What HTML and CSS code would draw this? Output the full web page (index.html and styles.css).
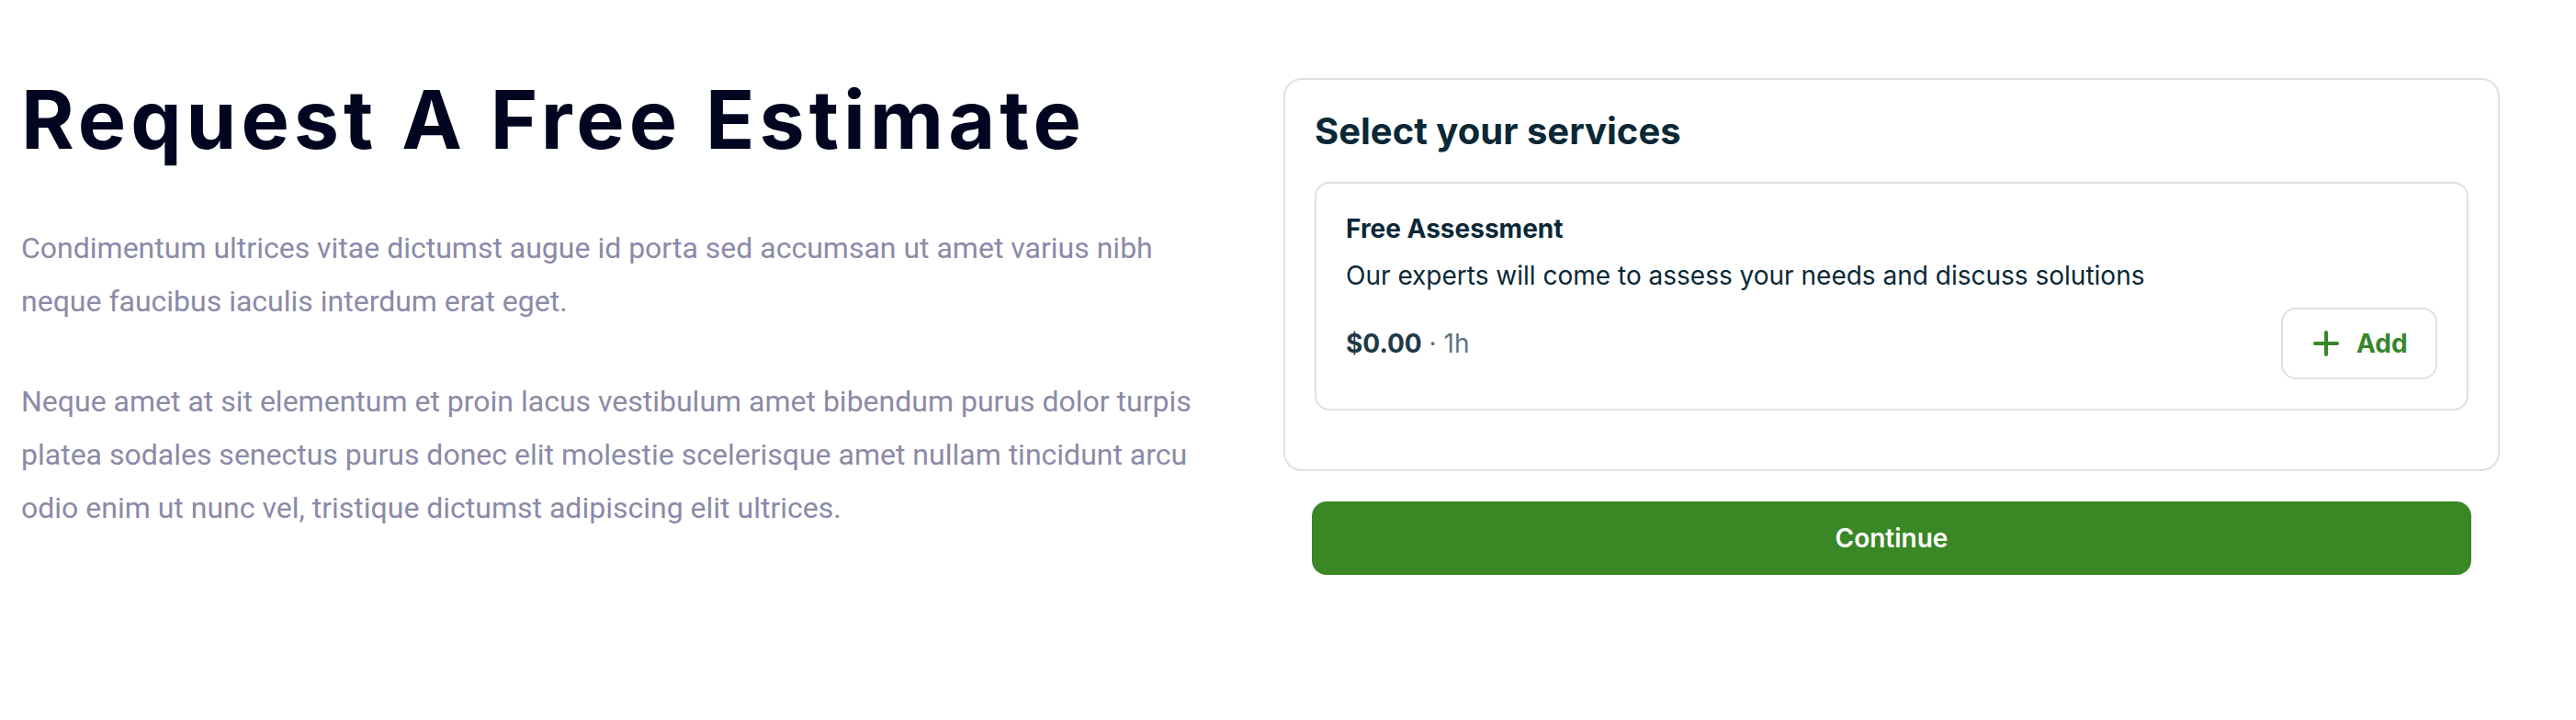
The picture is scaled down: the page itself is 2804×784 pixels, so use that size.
FILE: index.html
```html
<!DOCTYPE html>
<html lang="en">
<head>
<meta charset="utf-8">
<title>Request A Free Estimate</title>
<link rel="stylesheet" href="styles.css">
</head>
<body>
<main class="page">
  <section class="intro">
    <h1 class="intro-title">Request A Free Estimate</h1>
    <p class="intro-text">Condimentum ultrices vitae dictumst augue id porta sed accumsan ut amet varius nibh neque faucibus iaculis interdum erat eget.</p>
    <p class="intro-text">Neque amet at sit elementum et proin lacus vestibulum amet bibendum purus dolor turpis platea sodales senectus purus donec elit molestie scelerisque amet nullam tincidunt arcu odio enim ut nunc vel, tristique dictumst adipiscing elit ultrices.</p>
  </section>
  <section class="booking">
    <div class="services-card">
      <h2 class="services-title">Select your services</h2>
      <div class="service">
        <h3 class="service-name">Free Assessment</h3>
        <p class="service-desc">Our experts will come to assess your needs and discuss solutions</p>
        <div class="service-row">
          <div class="service-meta"><span class="price">$0.00</span><span class="duration"> · 1h</span></div>
          <button class="add-btn" type="button">
            <svg class="add-icon" width="28" height="28" viewBox="0 0 28 28" aria-hidden="true"><path d="M14 2v24M2 14h24" stroke="currentColor" stroke-width="4" stroke-linecap="round" fill="none"/></svg>
            <span>Add</span>
          </button>
        </div>
      </div>
    </div>
    <button class="continue-btn" type="button">Continue</button>
  </section>
</main>
</body>
</html>
```
FILE: styles.css
```css
* { box-sizing: border-box; }
html, body { margin: 0; padding: 0; background: #ffffff; }
body { font-family: "Inter", "Liberation Sans", sans-serif; }

.page {
  display: flex;
  align-items: flex-start;
  gap: 64px;
  padding: 78px 83px 0 23px;
}

.intro { width: 1310px; flex: none; }
.intro-title {
  margin: 0;
  font-family: "Inter", "Liberation Sans", sans-serif;
  font-weight: 700;
  font-size: 88px;
  line-height: 1.2;
  color: #02051f;
  letter-spacing: 5px;
  white-space: nowrap;
}
.intro-text {
  margin: 57px 0 0;
  font-family: "Roboto", "Liberation Sans", sans-serif;
  font-size: 32px;
  line-height: 58px;
  color: #8b8aa8;
}
.intro-text + .intro-text { margin-top: 51px; }

.booking { flex: 1; padding-top: 7px; }

.services-card {
  border: 2px solid #dde1e6;
  border-radius: 20px;
  padding: 32px;
}
.services-title {
  margin: 0 0 31px;
  font-size: 40px;
  line-height: 48px;
  font-weight: 700;
  color: #0a2836;
}
.service {
  border: 2px solid #dde1e6;
  border-radius: 16px;
  padding: 32px;
  margin-bottom: 32px;
  color: #0a2836;
}
.service-name {
  margin: 0 0 17px;
  font-size: 28px;
  line-height: 34px;
  font-weight: 700;
}
.service-desc {
  margin: 0 0 18px;
  font-size: 28px;
  line-height: 34px;
}
.service-row {
  display: flex;
  align-items: center;
  justify-content: space-between;
}
.service-meta { font-size: 28px; line-height: 34px; }
.price { font-weight: 700; color: #1d3a48; }
.duration { color: #5b7482; }

.add-btn {
  display: flex;
  align-items: center;
  gap: 19px;
  width: 170px;
  height: 78px;
  padding: 0 33px;
  border: 2px solid #dde1e6;
  border-radius: 16px;
  background: #fff;
  color: #38862a;
  font-family: "Inter", "Liberation Sans", sans-serif;
  font-size: 28px;
  font-weight: 700;
}
.add-icon { flex: none; }

.continue-btn {
  display: block;
  width: calc(100% - 62px);
  height: 80px;
  margin: 33px 31px 0;
  border: 0;
  border-radius: 16px;
  background: #3a8725;
  color: #fff;
  font-family: "Inter", "Liberation Sans", sans-serif;
  font-size: 28px;
  font-weight: 600;
}
```
